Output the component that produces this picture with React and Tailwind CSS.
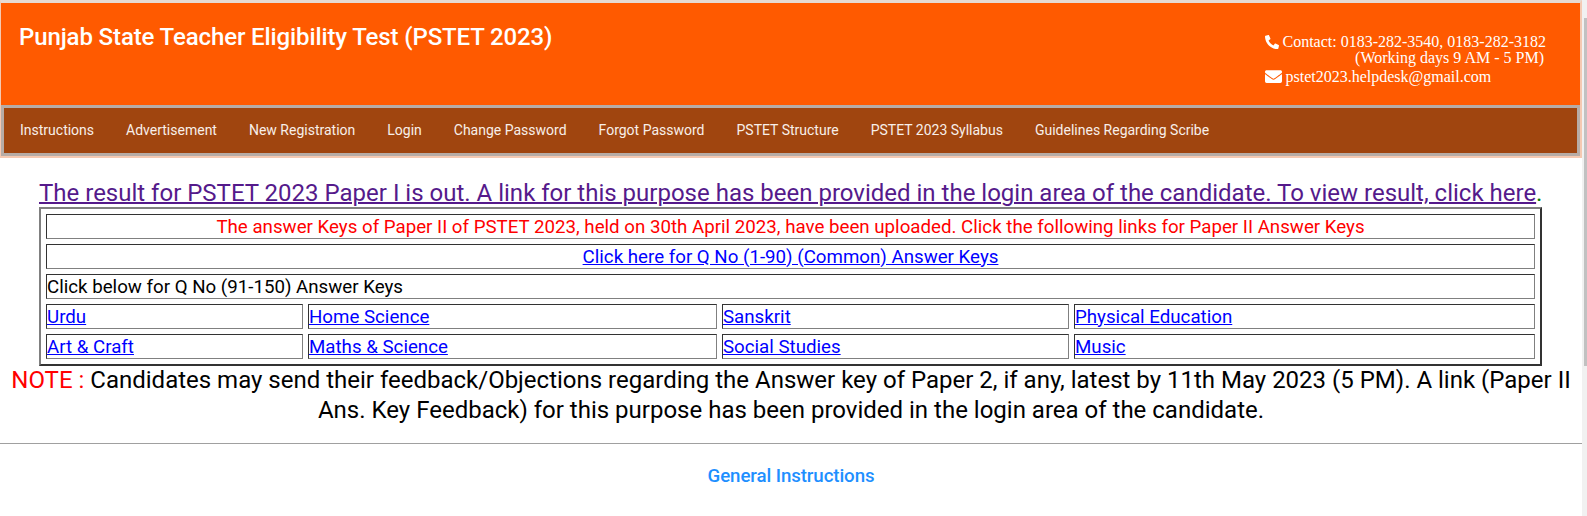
import { FaPhone, FaEnvelope } from 'react-icons/fa';

const navItems = [
  'Instructions',
  'Advertisement',
  'New Registration',
  'Login',
  'Change Password',
  'Forgot Password',
  'PSTET Structure',
  'PSTET 2023 Syllabus',
  'Guidelines Regarding Scribe',
];

const cellClass = 'border border-solid border-t-[#333] border-l-[#333] border-r-[#808080] border-b-[#808080] text-[18.72px] leading-[22px] h-[25px] p-0 align-middle';
const linkClass = 'text-[#0000ff] underline';

function App() {
  return (
    <div className="flex h-[516px] w-full overflow-hidden bg-white font-['Roboto',sans-serif]">
      <div className="min-w-0 flex-1">
        <div className="border-t-[3px] border-l border-r-2 border-b-2 border-t-[#e6dad2] border-l-[#f5c9b2] border-r-[#f5c9b2] border-b-[#f5c9b2]">
          <header className="h-[102px] bg-[#ff5a00] flex justify-between">
            <h1 className="pl-[18px] pt-[20px] text-[24px] leading-[29px] tracking-[-0.12px] font-medium text-white">
              Punjab State Teacher Eligibility Test (PSTET 2023)
            </h1>
            <div className="pt-[31px] pr-[34px] font-['Liberation_Serif',serif] text-[16px] leading-[16px] text-white">
              <p className="flex items-center gap-[3px]">
                <FaPhone className="h-[14px] w-[14px] -scale-x-100" />
                <span>Contact: 0183-282-3540, 0183-282-3182</span>
              </p>
              <p className="text-right pr-[2px]">(Working days 9 AM - 5 PM)</p>
              <p className="mt-[2px] flex items-center gap-[3px]">
                <FaEnvelope className="h-[17px] w-[17px]" />
                <span>pstet2023.helpdesk@gmail.com</span>
              </p>
            </div>
          </header>

          <nav className="h-[51px] border-[3px] border-[#b7aca6] bg-[#a0450f] flex items-center pl-[16px] pb-px gap-[32px] text-[14px] text-[#f8efe9]">
            {navItems.map((item) => (
              <a key={item} href="#">{item}</a>
            ))}
          </nav>
        </div>

        <p className="mt-[22px] pl-[39px] text-[24px] leading-[27px] text-[#008000] whitespace-nowrap">
          <a href="#" className="text-[#551a8b] underline decoration-2">
            The result for PSTET 2023 Paper I is out. A link for this purpose has been provided in the login area of the candidate. To view result, click here
          </a>.
        </p>

        <table className="ml-[39px] w-[1503px] border-separate border-spacing-[5px] border-2 border-solid border-t-[#808080] border-l-[#808080] border-r-[#333] border-b-[#333] text-black">
          <tbody>
            <tr>
              <td colSpan={4} className={`${cellClass} text-center text-[#ff0000]`}>
                The answer Keys of Paper II of PSTET 2023, held on 30th April 2023, have been uploaded. Click the following links for Paper II Answer Keys
              </td>
            </tr>
            <tr>
              <td colSpan={4} className={`${cellClass} text-center`}>
                <a href="#" className={linkClass}>Click here for Q No (1-90) (Common) Answer Keys</a>
              </td>
            </tr>
            <tr>
              <td colSpan={4} className={cellClass}>Click below for Q No (91-150) Answer Keys</td>
            </tr>
            <tr>
              <td className={`${cellClass} w-[257px]`}><a href="#" className={linkClass}>Urdu</a></td>
              <td className={`${cellClass} w-[409px]`}><a href="#" className={linkClass}>Home Science</a></td>
              <td className={`${cellClass} w-[347px]`}><a href="#" className={linkClass}>Sanskrit</a></td>
              <td className={cellClass}><a href="#" className={linkClass}>Physical Education</a></td>
            </tr>
            <tr>
              <td className={cellClass}><a href="#" className={linkClass}>Art &amp; Craft</a></td>
              <td className={cellClass}><a href="#" className={linkClass}>Maths &amp; Science</a></td>
              <td className={cellClass}><a href="#" className={linkClass}>Social Studies</a></td>
              <td className={cellClass}><a href="#" className={linkClass}>Music</a></td>
            </tr>
          </tbody>
        </table>

        <p className="-mt-px text-center text-[24px] leading-[30px] text-black">
          <span className="text-[#ff0000]">NOTE : </span>
          Candidates may send their feedback/Objections regarding the Answer key of Paper 2, if any, latest by 11th May 2023 (5 PM). A link (Paper II Ans. Key Feedback) for this purpose has been provided in the login area of the candidate.
        </p>

        <hr className="mt-[18px] border-t border-[#a0a0a0]" />

        <h2 className="mt-[22px] text-center text-[18.72px] leading-[20px] font-medium tracking-[-0.1px] text-[#1e8fff]">General Instructions</h2>
      </div>

      <div className="w-[5px] shrink-0 bg-[#f1f1f1] pl-[2px] pt-[18px]">
        <div className="h-[348px] bg-[#c1c1c1]" />
      </div>
    </div>
  );
}

export default App;
